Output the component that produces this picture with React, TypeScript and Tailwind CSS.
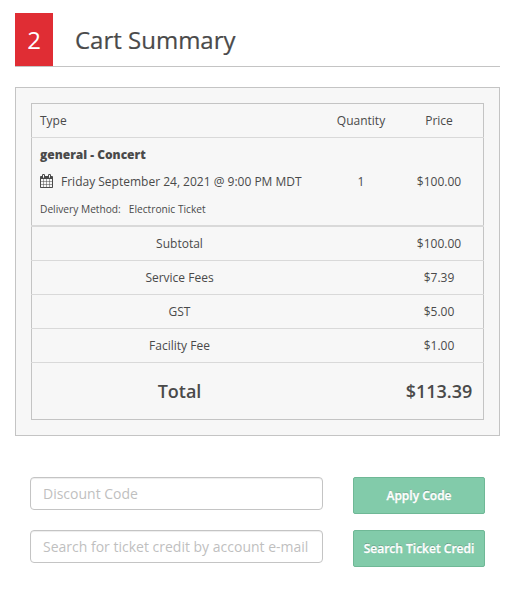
const fees = [
  { label: 'Subtotal', amount: '$100.00', border: 'border-t-2' },
  { label: 'Service Fees', amount: '$7.39', border: 'border-t' },
  { label: 'GST', amount: '$5.00', border: 'border-t' },
  { label: 'Facility Fee', amount: '$1.00', border: 'border-t' },
]

const rowClass = '-mx-px px-px border-[#d9d9d9] grid grid-cols-[295px_68px_88px]'

function CalendarIcon() {
  return (
    <svg className="w-[13px] h-[14px] mb-0.5 shrink-0" viewBox="0 0 1664 1792" fill="currentColor">
      <path d="M128 1664h288v-288h-288v288zm352 0h320v-288h-320v288zm-352-352h288v-320h-288v320zm352 0h320v-320h-320v320zm-352-384h288v-288h-288v288zm736 736h320v-288h-320v288zm-384-736h320v-288h-320v288zm768 736h288v-288h-288v288zm-384-352h320v-320h-320v320zm-352-864v-288q0-13-9.5-22.5t-22.5-9.5h-64q-13 0-22.5 9.5t-9.5 22.5v288q0 13 9.5 22.5t22.5 9.5h64q13 0 22.5-9.5t9.5-22.5zm736 864h288v-320h-288v320zm-384-384h320v-288h-320v288zm384 0h288v-288h-288v288zm32-480v-288q0-13-9.5-22.5t-22.5-9.5h-64q-13 0-22.5 9.5t-9.5 22.5v288q0 13 9.5 22.5t22.5 9.5h64q13 0 22.5-9.5t9.5-22.5zm384-64v1280q0 52-38 90t-90 38h-1408q-52 0-90-38t-38-90v-1280q0-52 38-90t90-38h128v-96q0-66 47-113t113-47h64q66 0 113 47t47 113v96h384v-96q0-66 47-113t113-47h64q66 0 113 47t47 113v96h128q52 0 90 38t38 90z" />
    </svg>
  )
}

function CodeRow({ placeholder, action }: { placeholder: string; action: string }) {
  return (
    <div className="flex items-start justify-between h-[37px]">
      <input
        type="text"
        placeholder={placeholder}
        className="w-[293px] h-[33px] px-3 pb-px rounded border border-[#c4c4c4] bg-white text-sm placeholder:text-[#bfbfbf] shadow-[inset_0_1px_1px_rgba(0,0,0,0.075)] outline-none"
      />
      <button className="w-[132px] h-[37px] rounded-xs border border-[#6fb896] bg-[#82cbaa] text-white text-xs font-semibold whitespace-nowrap text-center [-webkit-text-stroke:0.3px_white] [text-shadow:0_-1px_0_rgba(0,0,0,0.25)]">
        {action}
      </button>
    </div>
  )
}

export default function App() {
  return (
    <div className="w-[524px] h-[603px] bg-white pt-[13px] pl-[15px] text-[#4a4a4a] font-['Open_Sans',sans-serif]">
      {/* Section heading */}
      <div className="w-[485px] h-[54px] flex border-b border-[#c4c4c4]">
        <div className="w-[38px] h-[53px] bg-[#e02d34] text-white text-2xl flex items-center justify-center">2</div>
        <h1 className="ml-[22px] h-[53px] flex items-center text-2xl [-webkit-text-stroke:0.2px]">Cart Summary</h1>
      </div>

      {/* Order table */}
      <div className="mt-5 w-[485px] h-[349px] p-[15px] border border-[#c4c4c4] bg-[#f7f7f7]">
        <div className="w-[453px] h-[317px] border border-[#c4c4c4] text-xs">
          <div className="grid grid-cols-[295px_68px_88px] h-[33px] items-center">
            <div className="pl-2">Type</div>
            <div className="text-center">Quantity</div>
            <div className="text-center">Price</div>
          </div>

          <div className={`${rowClass} border-t h-[88px]`}>
            <div className="pl-2 pt-2 whitespace-nowrap">
              <div className="h-[18px] leading-[17px] font-extrabold">general - Concert</div>
              <div className="mt-2 h-5 flex items-center">
                <CalendarIcon />
                <span className="ml-2">Friday September 24, 2021 @ 9:00 PM MDT</span>
              </div>
              <div className="mt-2.5 text-[10.2px] leading-[15px]">
                Delivery Method:<span className="ml-2">Electronic Ticket</span>
              </div>
            </div>
            <div className="flex items-center justify-center">1</div>
            <div className="flex items-center justify-center">$100.00</div>
          </div>

          {fees.map((fee) => (
            <div key={fee.label} className={`${rowClass} ${fee.border}`}>
              <div className="h-[33px] flex items-center justify-center">{fee.label}</div>
              <div />
              <div className="flex items-center justify-center">{fee.amount}</div>
            </div>
          ))}

          <div className={`${rowClass} border-t h-[57px] items-center text-lg font-semibold`}>
            <div className="text-center">Total</div>
            <div />
            <div className="text-center">$113.39</div>
          </div>
        </div>
      </div>

      {/* Discount and credit lookup */}
      <div className="mt-[41px] ml-[15px] w-[455px] flex flex-col gap-4">
        <CodeRow placeholder="Discount Code" action="Apply Code" />
        <CodeRow placeholder="Search for ticket credit by account e-mail" action="Search Ticket Credi" />
      </div>
    </div>
  )
}
